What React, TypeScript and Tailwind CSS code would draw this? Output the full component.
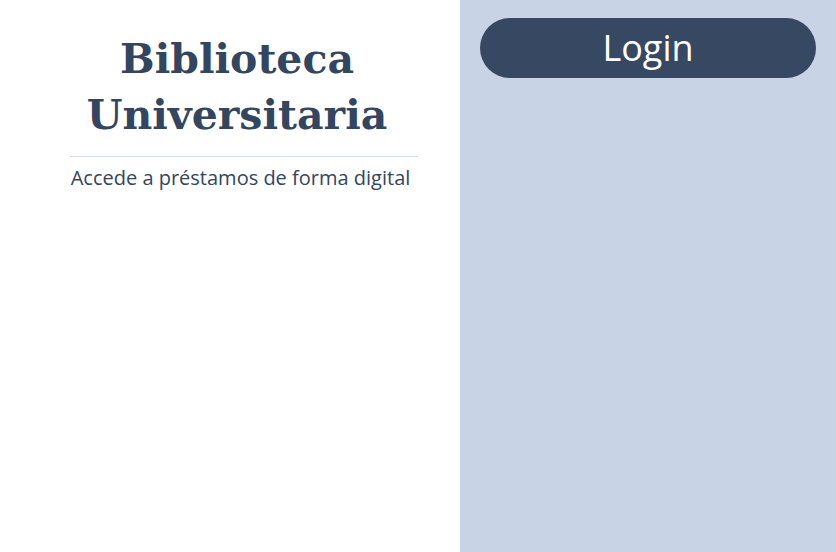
export default function App() {
  return (
    <div className="flex h-[552px] w-[836px] font-['Open_Sans',sans-serif]">
      <div className="w-[460px] shrink-0 bg-white pl-[70px] pr-[42px] pt-[31px]">
        <div className="border-b border-[#d3dbe8] pb-[13px]">
          <h1 className="pr-[14px] text-center font-['DejaVu_Serif',serif] text-[41px] font-bold leading-[56px] text-[#34455f]">
            Biblioteca Universitaria
          </h1>
        </div>
        <p className="mt-[7px] pr-[7px] text-center text-[20px] leading-[28px] text-[#34455f]">
          Accede a préstamos de forma digital
        </p>
      </div>
      <div className="flex-1 bg-[#c8d3e5] px-5 pt-[18px]">
        <button className="h-[60px] w-full rounded-full bg-[#374862] text-[36px] font-normal leading-[60px] text-white">
          Login
        </button>
      </div>
    </div>
  )
}
